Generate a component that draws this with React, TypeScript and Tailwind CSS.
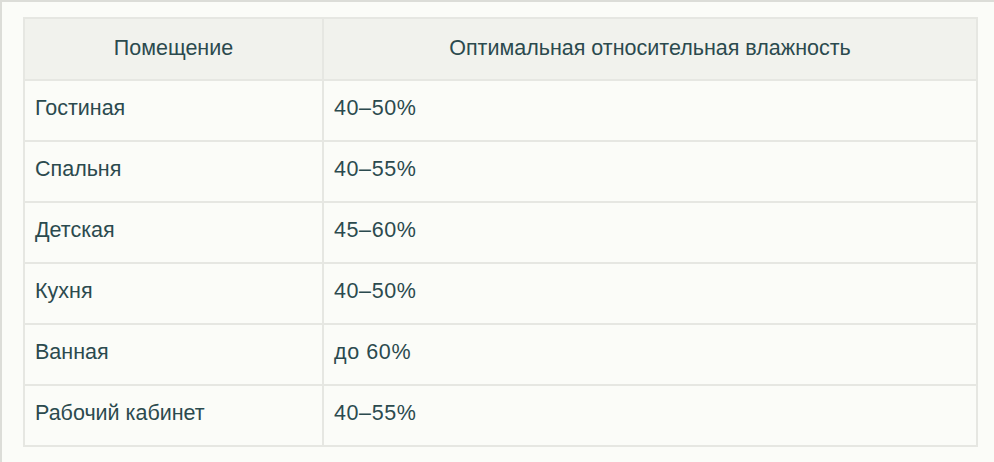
import React from 'react';

const rows: [string, string][] = [
  ['Гостиная', '40–50%'],
  ['Спальня', '40–55%'],
  ['Детская', '45–60%'],
  ['Кухня', '40–50%'],
  ['Ванная', 'до 60%'],
  ['Рабочий кабинет', '40–55%'],
];

export default function App() {
  return (
    <div
      className="h-[462px] w-[994px] overflow-hidden bg-[#fbfcf8] text-[#2b4a4e]"
      style={{ fontFamily: '"Liberation Sans", Arial, sans-serif' }}
    >
      <div className="h-full border-l-2 border-t-2 border-[#dcddd8] pl-[21px] pt-[15px]">
        <table className="w-[955px] border-collapse text-[21.5px] leading-none">
          <thead>
            <tr className="bg-[#f1f2ed]">
              <th className="h-[62px] w-[299px] border-2 border-[#e6e7e2] px-[10px] text-center font-normal">
                Помещение
              </th>
              <th className="h-[62px] border-2 border-[#e6e7e2] px-[10px] text-center font-normal">
                Оптимальная относительная влажность
              </th>
            </tr>
          </thead>
          <tbody>
            {rows.map(([room, value]) => (
              <tr key={room}>
                <td className="h-[61px] border-2 border-[#e6e7e2] px-[10px] pb-[4px]">{room}</td>
                <td className="h-[61px] border-2 border-[#e6e7e2] px-[10px] pb-[4px] tracking-[0.6px]">
                  {value}
                </td>
              </tr>
            ))}
          </tbody>
        </table>
      </div>
    </div>
  );
}
